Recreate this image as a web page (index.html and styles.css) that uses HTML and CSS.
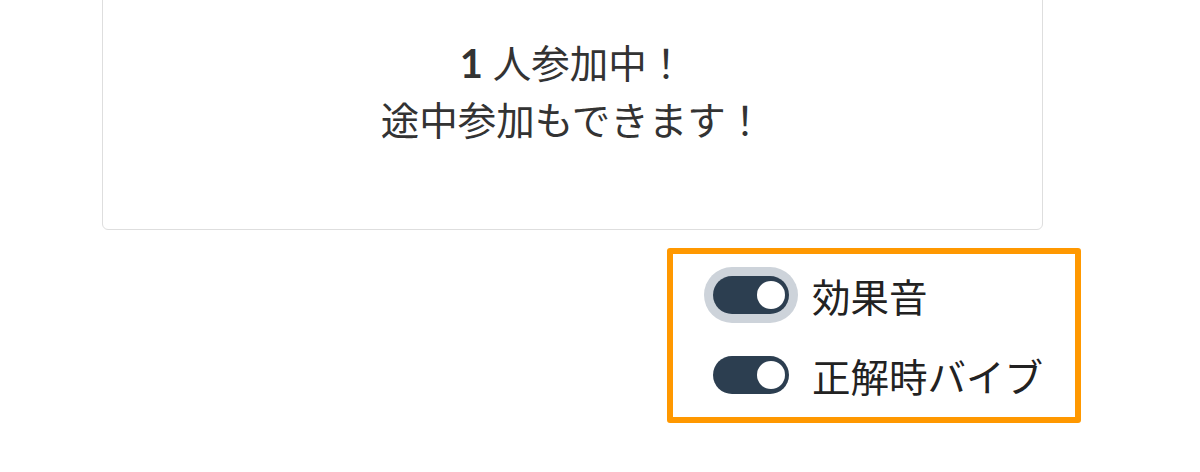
FILE: index.html
```html
<!DOCTYPE html>
<html lang="ja">
<head>
    <meta charset="UTF-8">
    <meta name="viewport" content="width=device-width, initial-scale=1.0">
    <title>待機中</title>
    <link rel="stylesheet" href="styles.css">
</head>
<body>
    <div class="page">
        <div class="card">
            <p class="count"><strong>1</strong> 人参加中！</p>
            <p class="note">途中参加もできます！</p>
        </div>

        <div class="options">
            <label class="option">
                <input type="checkbox" class="switch focused" checked>
                <span>効果音</span>
            </label>
            <label class="option">
                <input type="checkbox" class="switch" checked>
                <span>正解時バイブ</span>
            </label>
        </div>
    </div>
</body>
</html>
```

FILE: styles.css
```css
body {
    margin: 0;
    font-family: Lato, "Noto Sans CJK JP", sans-serif;
    background-color: #fff;
    color: #333;
}
.page {
    width: 979px;
    padding-left: 102px;
}
.card {
    width: 941px;
    box-sizing: border-box;
    margin-top: -44px;
    padding: 78px 20px 80px;
    border: 1px solid #dedede;
    border-radius: 6px;
    text-align: center;
    font-size: 38.5px;
    line-height: 57px;
}
.card p {
    margin: 0;
}
.card strong {
    font-weight: 700;
    font-size: 40px;
}
.options {
    width: 414px;
    height: 175px;
    box-sizing: border-box;
    margin: 18px 0 0 565px;
    padding: 13px 0 0 40px;
    border: 6px solid #ff9800;
    border-radius: 3px;
    display: flex;
    flex-direction: column;
    gap: 24px;
}
.option {
    height: 56px;
    display: flex;
    align-items: center;
    gap: 23px;
    font-size: 38.5px;
    color: #222;
}
.switch {
    appearance: none;
    -webkit-appearance: none;
    position: relative;
    width: 76px;
    height: 38px;
    margin: 0;
    border-radius: 19px;
    background-color: #2c3e50;
    flex-shrink: 0;
}
.switch::after {
    content: "";
    position: absolute;
    top: 5px;
    right: 4px;
    width: 28px;
    height: 28px;
    border-radius: 50%;
    background-color: #fff;
}
.switch.focused {
    box-shadow: 0 0 0 9px #cdd3da;
}
```
